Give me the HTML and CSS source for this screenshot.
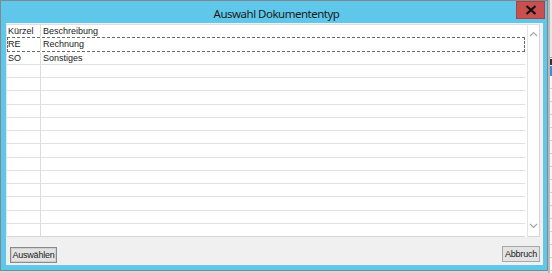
FILE: index.html
```html
<!DOCTYPE html>
<html lang="de">
<head>
<meta charset="utf-8">
<title>Auswahl Dokumententyp</title>
<link rel="stylesheet" href="styles.css">
</head>
<body>
<div class="screen">
  <div class="window">
    <div class="titlebar">
      <span class="title">Auswahl Dokumententyp</span>
      <button class="close" aria-label="Schließen">
        <svg width="12" height="10" viewBox="0 0 12 10"><path d="M1.5 1 L10.5 9 M10.5 1 L1.5 9" stroke="#111" stroke-width="2.2" fill="none"/></svg>
      </button>
    </div>
    <div class="panel">
      <div class="listarea">
        <div class="grid">
          <div class="row head"><span class="c1">Kürzel</span><span class="c2">Beschreibung</span></div>
          <div class="row focus"><span class="c1">RE</span><span class="c2">Rechnung</span></div>
          <div class="row"><span class="c1">SO</span><span class="c2">Sonstiges</span></div>
          <div class="row"><span class="c1"></span><span class="c2"></span></div>
          <div class="row"><span class="c1"></span><span class="c2"></span></div>
          <div class="row"><span class="c1"></span><span class="c2"></span></div>
          <div class="row"><span class="c1"></span><span class="c2"></span></div>
          <div class="row"><span class="c1"></span><span class="c2"></span></div>
          <div class="row"><span class="c1"></span><span class="c2"></span></div>
          <div class="row"><span class="c1"></span><span class="c2"></span></div>
          <div class="row"><span class="c1"></span><span class="c2"></span></div>
          <div class="row"><span class="c1"></span><span class="c2"></span></div>
          <div class="row"><span class="c1"></span><span class="c2"></span></div>
          <div class="row"><span class="c1"></span><span class="c2"></span></div>
          <div class="row"><span class="c1"></span><span class="c2"></span></div>
          <div class="row last"><span class="c1"></span><span class="c2"></span></div>
        </div>
        <div class="scrollbar">
          <svg width="9" height="6" viewBox="0 0 9 6"><path d="M1 5 L4.5 1.5 L8 5" stroke="#a6a6a6" stroke-width="1.2" fill="none"/></svg>
          <svg width="9" height="6" viewBox="0 0 9 6"><path d="M1 1 L4.5 4.5 L8 1" stroke="#a6a6a6" stroke-width="1.2" fill="none"/></svg>
        </div>
      </div>
      <div class="buttons">
        <button class="btn default">Auswählen</button>
        <button class="btn">Abbruch</button>
      </div>
    </div>
  </div>
  <div class="outside">
    <div class="out-top"></div>
    <div class="out-letter"><span class="out-mark"></span></div>
    <div class="out-sel"></div>
    <div class="out-rest"></div>
  </div>
</div>
</body>
</html>
```
FILE: styles.css
```css
* { box-sizing: border-box; }
html, body { margin: 0; padding: 0; }
body {
  width: 552px;
  height: 273px;
  overflow: hidden;
  background: #d9d9d9;
  font-family: "Liberation Sans", Arial, sans-serif;
}
.screen {
  display: flex;
  width: 552px;
  height: 273px;
}
.window {
  width: 548px;
  height: 271px;
  flex: none;
  background: #5fc7ea;
  border: 1px solid #7d8a90;
  padding: 0 4px 5px 5px;
  display: flex;
  flex-direction: column;
}
.titlebar {
  height: 22px;
  flex: none;
  position: relative;
  display: flex;
  align-items: center;
  justify-content: center;
}
.title {
  font-family: "Noto Sans", "Open Sans", sans-serif;
  font-size: 11.5px;
  letter-spacing: -0.5px;
  color: #1b1b1b;
  margin-top: 3px;
  margin-left: 4px;
}
.close {
  position: absolute;
  right: -2px;
  top: 0;
  width: 29px;
  height: 18px;
  border: 1px solid #a94242;
  background: #c9504e;
  padding: 0;
  display: flex;
  align-items: center;
  justify-content: center;
}
.panel {
  flex: 1;
  background: #f0f0f0;
  display: flex;
  flex-direction: column;
  padding: 1px 3px 0 0;
}
.listarea {
  height: 213px;
  display: flex;
  background: #fff;
}
.grid {
  flex: 1;
  display: flex;
  flex-direction: column;
  border-top: 1px solid #dedede;
  border-left: 1px solid #e6e6e6;
  padding-right: 2px;
}
.row {
  flex: 1;
  display: flex;
  border-bottom: 1px solid #e1e1e1;
  font-size: 9px;
  color: #1a1a1a;
  line-height: 12px;
}
.row.last { border-bottom: 1px solid #d6d6d6; }
.row.head { border-bottom: none; }
.row.focus {
  border: 1px dashed #6a6a6a;
}
.c1 {
  width: 34px;
  flex: none;
  padding-left: 1px;
  border-right: 1px solid #dcdcdc;
}
.row.focus .c1 { width: 33px; padding-left: 0; }
.c2 {
  flex: 1;
  padding-left: 2px;
}
.scrollbar {
  width: 13px;
  flex: none;
  border-left: 1px solid #e3e3e3;
  border-right: 1px solid #d4d4d4;
  border-top: 1px solid #dedede;
  border-bottom: 1px solid #d6d6d6;
  background: #fff;
  display: flex;
  flex-direction: column;
  justify-content: space-between;
  align-items: center;
  padding: 6px 0 7px;
}
.buttons {
  flex: 1;
  display: flex;
  justify-content: space-between;
  align-items: flex-start;
  padding: 9px 0 0 4px;
}
.btn {
  font-family: "Liberation Sans", Arial, sans-serif;
  font-size: 9px;
  letter-spacing: -0.2px;
  color: #1a1a1a;
  height: 16px;
  padding: 0 2px;
  background: #e3e3e3;
  border: 1px solid #a7a7a7;
  line-height: 12px;
  white-space: nowrap;
}
.btn.default {
  margin-top: 1px;
  width: 47px;
  padding: 0;
  box-shadow: inset 0 0 0 1px #d0d0d0;
  border-color: #8a8a8a;
}
.btn:not(.default) { width: 38px; padding: 0; }
.outside {
  flex: 1;
  display: flex;
  flex-direction: column;
  border-left: 2px solid #b8b8b8;
  background: #f2f2f2;
}
.out-top { height: 58px; background: #e6e6e6; border-bottom: 1px solid #8aa0b0; }
.out-letter { height: 8px; padding: 1px 0 0 0; }
.out-mark { display: block; width: 2px; height: 6px; background: #333; }
.out-sel { height: 10px; background: #3a8fd9; }
.out-rest {
  flex: 1;
  background: repeating-linear-gradient(#f6f6f6 0 12px, #d0d0d0 12px 13px);
}
```
